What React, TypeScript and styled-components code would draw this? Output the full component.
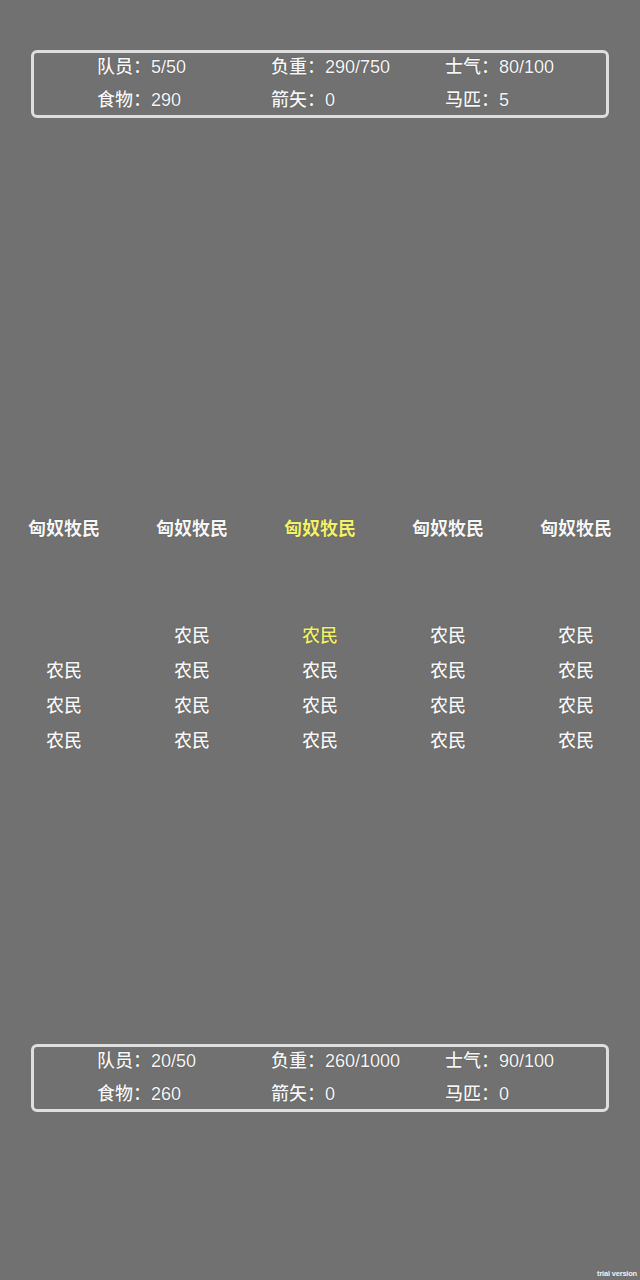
import styled, { createGlobalStyle } from "styled-components";

const GlobalStyle = createGlobalStyle`
  body {
    margin: 0;
    background: #717171;
    font-family: "Liberation Sans", "Noto Sans CJK SC", sans-serif;
  }
`;

type Stats = {
  members: string;
  load: string;
  morale: string;
  food: string;
  arrows: string;
  horses: string;
};

const enemy: Stats = {
  members: "5/50",
  load: "290/750",
  morale: "80/100",
  food: "290",
  arrows: "0",
  horses: "5",
};

const player: Stats = {
  members: "20/50",
  load: "260/1000",
  morale: "90/100",
  food: "260",
  arrows: "0",
  horses: "0",
};

// column -> number of farmers, stacked from the bottom
const squads = [3, 4, 4, 4, 4];
const ROWS = 4;
const SELECTED = 2;

const StatPanel = ({ stats }: { stats: Stats }) => (
  <Panel>
    <Stat>队员：{stats.members}</Stat>
    <Stat>负重：{stats.load}</Stat>
    <Stat>士气：{stats.morale}</Stat>
    <Stat>食物：{stats.food}</Stat>
    <Stat>箭矢：{stats.arrows}</Stat>
    <Stat>马匹：{stats.horses}</Stat>
  </Panel>
);

const App = () => {
  return (
    <>
      <GlobalStyle />
      <Page>
        <StatPanel stats={enemy} />
        <Leaders>
          {squads.map((_, i) => (
            <Leader key={i} $active={i === SELECTED}>
              匈奴牧民
            </Leader>
          ))}
        </Leaders>
        <Troops>
          {Array.from({ length: ROWS }).map((_, row) =>
            squads.map((count, col) => (
              <Farmer key={`${row}-${col}`} $active={col === SELECTED && row === 0}>
                {row >= ROWS - count ? "农民" : ""}
              </Farmer>
            ))
          )}
        </Troops>
        <BottomArea>
          <StatPanel stats={player} />
        </BottomArea>
        <Watermark>trial version</Watermark>
      </Page>
    </>
  );
};

export default App;

const Page = styled.div`
  position: relative;
  height: 1280px;
  padding-top: 50px;
  box-sizing: border-box;
  display: flex;
  flex-direction: column;
  overflow: hidden;
`;

const Panel = styled.div`
  margin: 0 31px;
  height: 68px;
  box-sizing: border-box;
  border: 3px solid #dedede;
  border-radius: 6px;
  padding: 0 0 0 63px;
  display: grid;
  grid-template-columns: 174px 174px 1fr;
  grid-auto-rows: 28px;
  row-gap: 5px;
  align-content: start;
`;

const Stat = styled.div`
  font-size: 18px;
  font-weight: 500;
  line-height: 29px;
  color: #f6f6f6;
  white-space: nowrap;
  text-shadow: 0 0 1px rgba(0, 0, 0, 0.5);
`;

const Leaders = styled.div`
  margin-top: 397px;
  display: grid;
  grid-template-columns: repeat(5, 128px);
`;

const Leader = styled.div<{ $active: boolean }>`
  text-align: center;
  font-size: 18px;
  font-weight: 600;
  line-height: 28px;
  color: ${(p) => (p.$active ? "#f2f26a" : "#f6f6f6")};
  text-shadow: 0 0 1px rgba(0, 0, 0, 0.5);
`;

const Troops = styled.div`
  margin-top: 75.5px;
  display: grid;
  grid-template-columns: repeat(5, 128px);
  grid-auto-rows: 35px;
`;

const Farmer = styled.div<{ $active: boolean }>`
  text-align: center;
  font-size: 18px;
  font-weight: 500;
  line-height: 35px;
  color: ${(p) => (p.$active ? "#f2f26a" : "#f6f6f6")};
  text-shadow: 0 0 1px rgba(0, 0, 0, 0.5);
`;

const BottomArea = styled.div`
  margin-top: 285.5px;
  display: flex;
  flex-direction: column;
`;

const Watermark = styled.div`
  position: absolute;
  right: 3px;
  bottom: 2px;
  font-size: 7.5px;
  font-weight: bold;
  letter-spacing: -0.2px;
  color: #f0f0f0;
  font-family: "Liberation Sans", sans-serif;
`;
